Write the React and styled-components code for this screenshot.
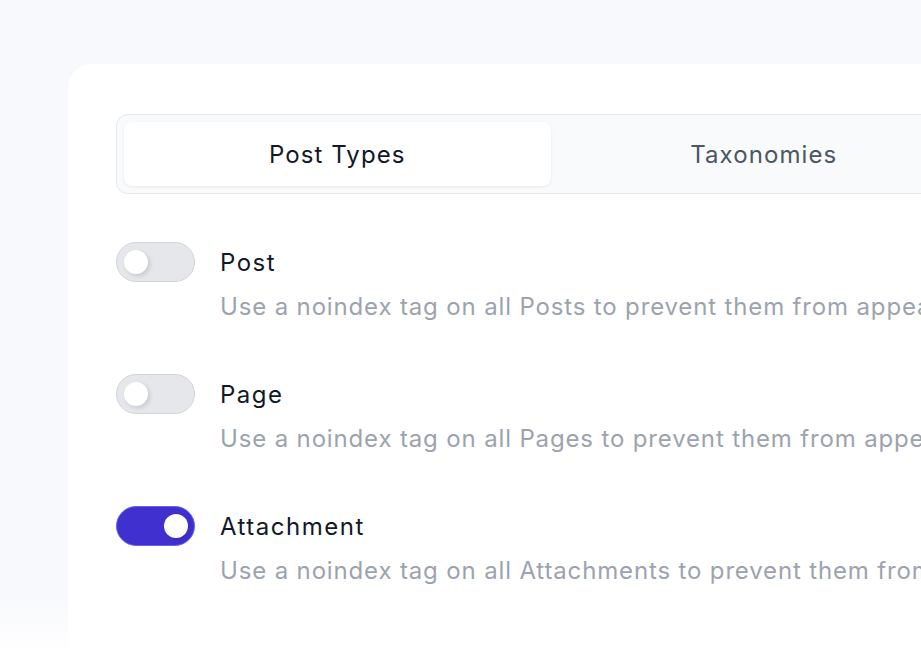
import React, { useState } from 'react'
import styled, { createGlobalStyle } from 'styled-components'

const colors = {
  page: '#f8f9fc',
  white: '#ffffff',
  border: '#e5e7eb',
  tabsBg: '#f9fafb',
  dark: '#111827',
  mid: '#4b5563',
  muted: '#9ca3af',
  off: '#e5e7eb',
  offBorder: '#d1d5db',
  on: '#4030d0',
  onBorder: '#6366f1',
}

const GlobalStyle = createGlobalStyle`
  html, body {
    margin: 0;
    padding: 0;
    overflow: hidden;
  }
  body {
    background: linear-gradient(to bottom, ${colors.page} 0, ${colors.page} 600px, #ffffff 654px);
    font-family: 'Inter', 'Noto Sans', sans-serif;
    -webkit-font-smoothing: antialiased;
  }
`

const rows = [
  { id: 'post', title: 'Post', text: 'Use a noindex tag on all Posts to prevent them from appearing in search results.', on: false },
  { id: 'page', title: 'Page', text: 'Use a noindex tag on all Pages to prevent them from appearing in search results.', on: false },
  { id: 'attachment', title: 'Attachment', text: 'Use a noindex tag on all Attachments to prevent them from appearing in search results.', on: true },
]

const App = () => {
  const [tab, setTab] = useState('post-types')
  const [state, setState] = useState(() => Object.fromEntries(rows.map(r => [r.id, r.on])))

  return (
    <>
      <GlobalStyle />
      <Page>
        <Card>
          <Tabs>
            <Tab active={tab === 'post-types'} onClick={() => setTab('post-types')}>Post Types</Tab>
            <Tab active={tab === 'taxonomies'} onClick={() => setTab('taxonomies')}>Taxonomies</Tab>
          </Tabs>
          <List>
            {rows.map(r => (
              <Row key={r.id}>
                <Switch
                  on={state[r.id]}
                  onClick={() => setState(s => ({ ...s, [r.id]: !s[r.id] }))}
                  aria-pressed={state[r.id]}
                >
                  <Knob on={state[r.id]} />
                </Switch>
                <Text>
                  <Title>{r.title}</Title>
                  <Desc>{r.text}</Desc>
                </Text>
              </Row>
            ))}
          </List>
        </Card>
      </Page>
    </>
  )
}

const Page = styled.div`
  padding: 64px 0 0 68px;
  height: 654px;
  box-sizing: border-box;
`
const Card = styled.div`
  width: 965px;
  min-height: 700px;
  box-sizing: border-box;
  background-color: ${colors.white};
  border-radius: 24px;
  padding: 50px 48px;
`
const Tabs = styled.div`
  display: grid;
  grid-template-columns: 1fr 1fr;
  padding: 7px;
  border: 1px solid ${colors.border};
  border-radius: 12px;
  background-color: ${colors.tabsBg};
`
const Tab = styled.button`
  height: 64px;
  border: none;
  border-radius: 8px;
  background: ${p => (p.active ? colors.white : 'transparent')};
  box-shadow: ${p => (p.active ? '0 1px 3px rgba(17, 24, 39, 0.08)' : 'none')};
  color: ${p => (p.active ? colors.dark : colors.mid)};
  font-family: inherit;
  letter-spacing: 1.1px;
  font-size: 24px;
  font-weight: 400;
  cursor: pointer;
`
const List = styled.div`
  display: flex;
  flex-direction: column;
  gap: 48px;
  margin-top: 48px;
`
const Row = styled.div`
  display: flex;
  gap: 25px;
`
const Switch = styled.button`
  flex: none;
  position: relative;
  width: 79px;
  height: 40px;
  padding: 0;
  border-radius: 20px;
  border: 1px solid ${p => (p.on ? colors.onBorder : colors.offBorder)};
  background-color: ${p => (p.on ? colors.on : colors.off)};
  cursor: pointer;
`
const Knob = styled.span`
  position: absolute;
  top: 7px;
  left: ${p => (p.on ? '47px' : '7px')};
  width: 24px;
  height: 24px;
  border-radius: 50%;
  background-color: ${colors.white};
  box-shadow: 2px 2px 4px rgba(17, 24, 39, 0.15);
`
const Text = styled.div`
  display: flex;
  flex-direction: column;
  white-space: nowrap;
`
const Title = styled.span`
  padding-top: 1px;
  font-size: 24px;
  line-height: 40px;
  font-weight: 400;
  letter-spacing: 1.5px;
  color: ${colors.dark};
`
const Desc = styled.span`
  margin-top: 5px;
  font-size: 24px;
  line-height: 38px;
  letter-spacing: 0.85px;
  color: ${colors.muted};
`

export default App
